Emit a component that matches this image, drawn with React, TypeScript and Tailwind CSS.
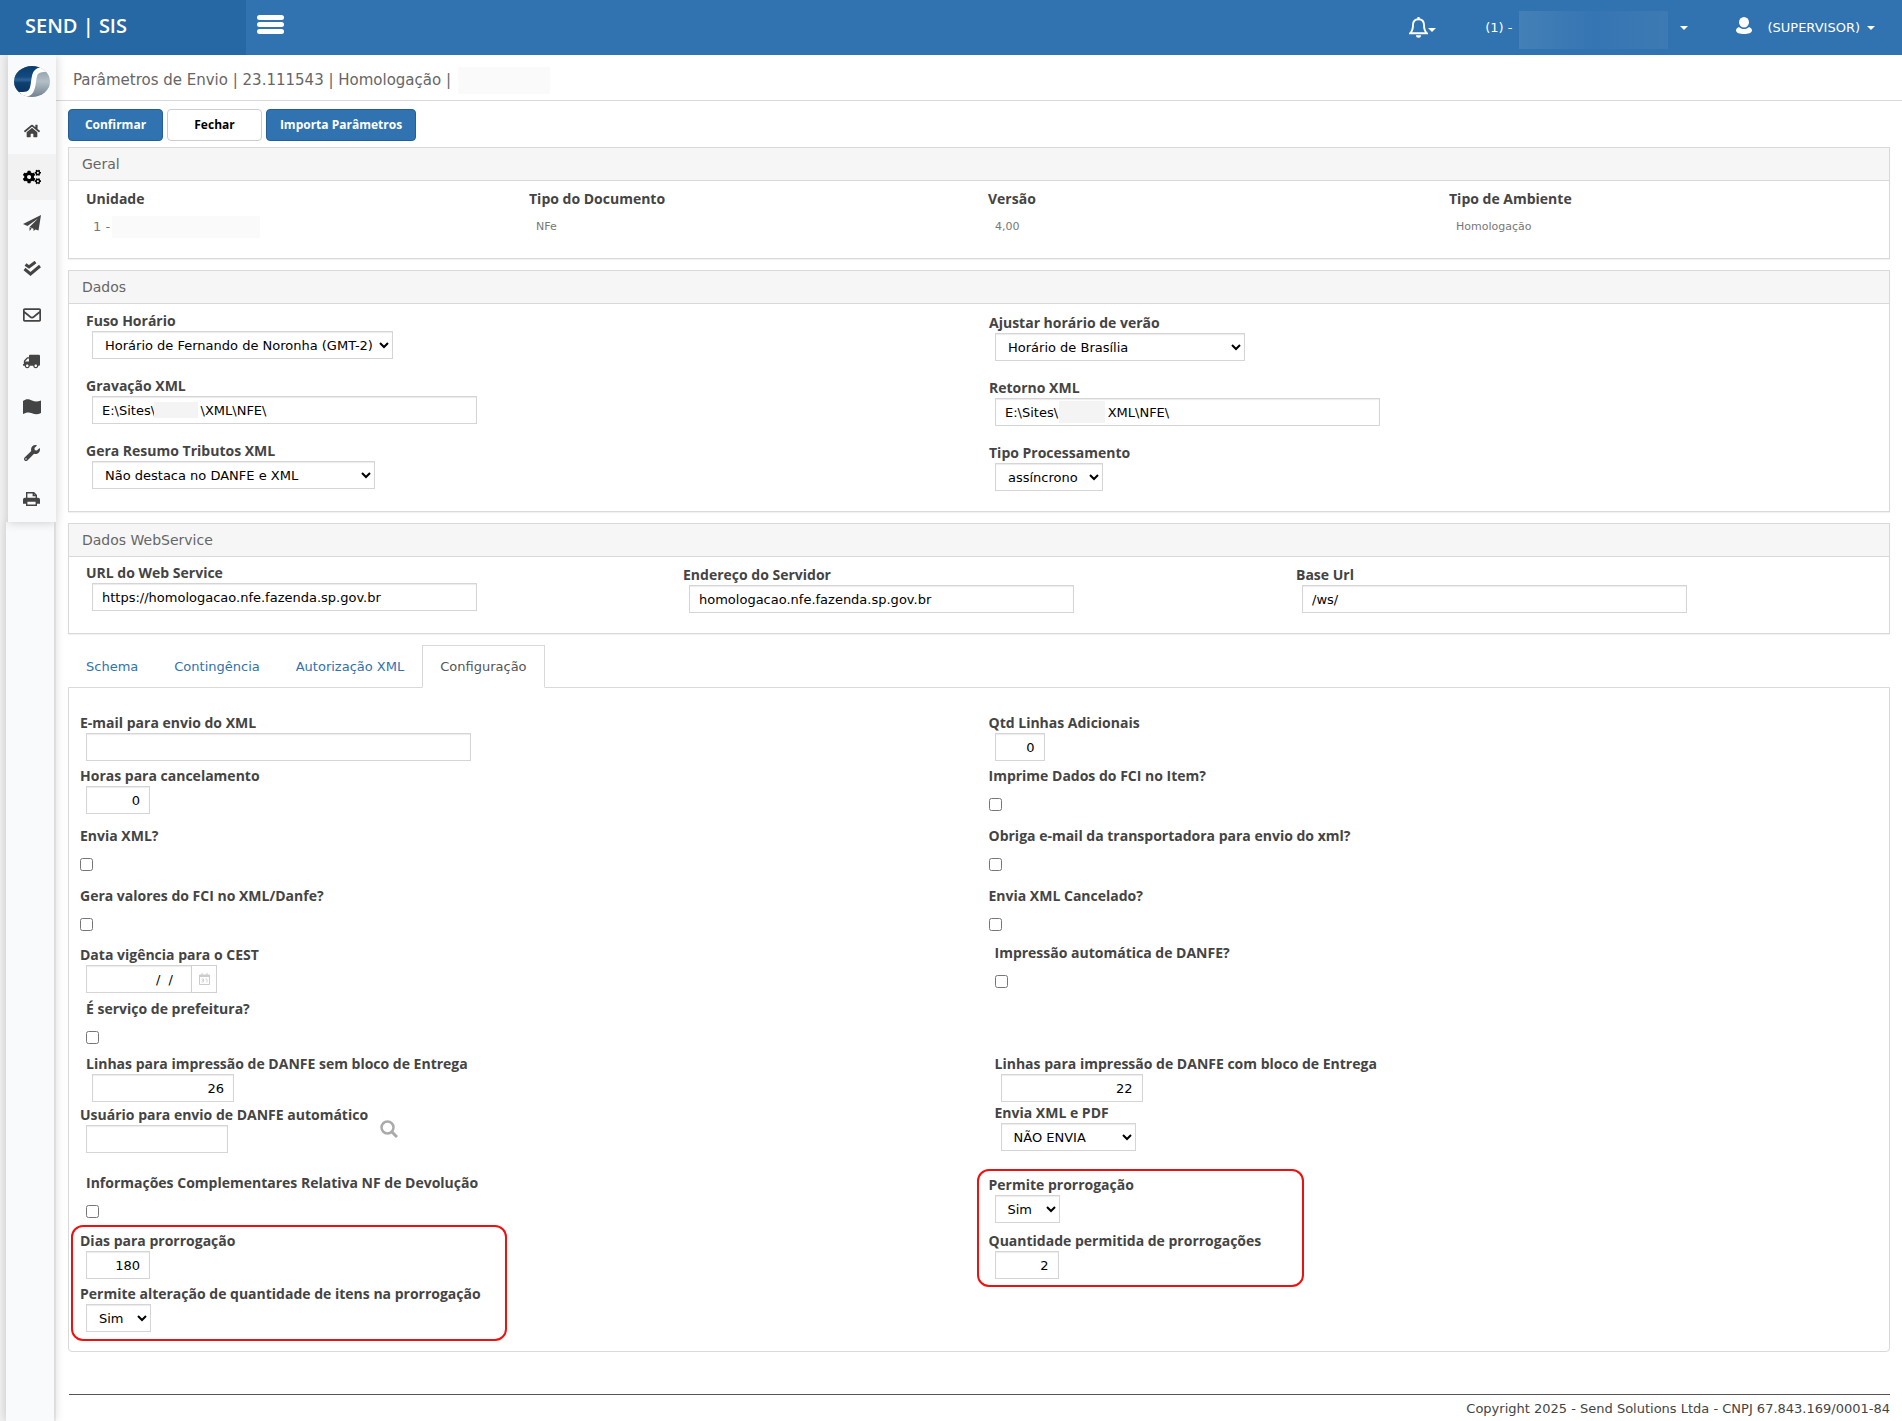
import React from 'react';
import { FaHome, FaCogs, FaRegEnvelope, FaTruck, FaWrench } from 'react-icons/fa';

const inputClass =
  'block h-7 rounded-none border border-[#d5d5d5] bg-white text-[13px] text-black shadow-[inset_0_1px_1px_rgba(0,0,0,0.08)]';

interface LabelProps {
  htmlFor: string;
  children: React.ReactNode;
}

function Label({ htmlFor, children }: LabelProps) {
  return (
    <label
      htmlFor={htmlFor}
      className="block h-5 whitespace-nowrap font-['Open_Sans',sans-serif] text-sm leading-5 font-bold text-[#444]"
    >
      {children}
    </label>
  );
}

interface FieldProps {
  id: string;
  label: string;
  className?: string;
  value?: string;
  width?: string;
  align?: string;
}

function TextField({ id, label, className = '', value = '', width = 'w-[385px]', align = '' }: FieldProps) {
  return (
    <div className={className}>
      <Label htmlFor={id}>{label}</Label>
      <input id={id} type="text" defaultValue={value} className={`${inputClass} ml-1.5 px-[9px] ${width} ${align}`} />
    </div>
  );
}

// Path fields have the customer folder hidden
function PathField({ id, label, className = '', value, mask }: FieldProps & { mask: string }) {
  return (
    <div className={className}>
      <Label htmlFor={id}>{label}</Label>
      <div className="relative ml-1.5 w-[385px]">
        <input id={id} type="text" defaultValue={value} className={`${inputClass} w-full px-[9px]`} />
        <span className={`absolute bg-[#f4f4f4] ${mask}`} />
      </div>
    </div>
  );
}

function SelectField({ id, label, className = '', value, width = '' }: FieldProps) {
  return (
    <div className={className}>
      <Label htmlFor={id}>{label}</Label>
      <select id={id} className={`${inputClass} ml-1.5 pl-2 ${width}`}>
        <option>{value}</option>
      </select>
    </div>
  );
}

function CheckField({ id, label, className = '' }: FieldProps) {
  return (
    <div className={className}>
      <Label htmlFor={id}>{label}</Label>
      <input id={id} type="checkbox" className="mt-3 block h-[13px] w-[13px]" />
    </div>
  );
}

function Panel({ title, children }: { title: string; children: React.ReactNode }) {
  return (
    <section className="mb-[11px] border border-[#d9d9d9] shadow-[0_1px_1px_rgba(0,0,0,0.05)]">
      <h2 className="h-[33px] border-b border-[#d9d9d9] bg-[#f6f6f6] px-[13px] text-sm leading-8 text-[#666]">
        {title}
      </h2>
      {children}
    </section>
  );
}

function Caret({ className = '' }: { className?: string }) {
  return (
    <span
      className={`inline-block h-0 w-0 border-x-4 border-t-4 border-x-transparent border-t-white ${className}`}
    />
  );
}

function Logo() {
  return (
    <svg width="36" height="31" viewBox="0 0 36 31">
      <defs>
        <linearGradient id="logoBlue" x1="0" y1="0" x2="0" y2="1">
          <stop offset="0" stopColor="#0b3c6b" />
          <stop offset="0.38" stopColor="#124a80" />
          <stop offset="0.5" stopColor="#2f6496" />
          <stop offset="0.6" stopColor="#0d3f70" />
          <stop offset="1" stopColor="#0b3560" />
        </linearGradient>
        <linearGradient id="logoGray" x1="0" y1="0" x2="0" y2="1">
          <stop offset="0" stopColor="#8797a3" />
          <stop offset="0.5" stopColor="#b3bfc7" />
          <stop offset="1" stopColor="#71828f" />
        </linearGradient>
        <clipPath id="logoShape">
          <ellipse cx="18" cy="15.500" rx="18" ry="15.500" />
        </clipPath>
      </defs>
      <g clipPath="url(#logoShape)">
        <path d="M0 0h36v31H0z" fill="url(#logoGray)" />
        <path d="M0 0H28C20 4 21 10 20 16c-1 8-3 12-11 12H0z" fill="url(#logoBlue)" />
        <path d="M38 3.500H29C20.500 4 20.500 9 19.500 16 18.500 24 17 28.500 9 28.500H-2" fill="none" stroke="#fff" strokeWidth="5" />
      </g>
    </svg>
  );
}

function PlaneIcon() {
  return (
    <svg width="18" height="16" viewBox="0 0 18 16" fill="currentColor">
      <path d="M18 0 0 9l4.500 2L15 3.500 6.500 12v0l4 1.800V16l2-1.600L15.500 15.500z" />
      <path d="M6.500 12.300V16l2.200-2.400z" />
    </svg>
  );
}

function ChecksIcon() {
  return (
    <svg width="18" height="16" viewBox="0 0 18 16" fill="none" stroke="currentColor" strokeWidth="3">
      <path d="M2.500 3.500 6 6 12.500 1" />
      <path d="M1.500 8 7.500 13 17 5" />
    </svg>
  );
}

function MapIcon() {
  return (
    <svg width="18" height="16" viewBox="0 0 18 16" fill="currentColor">
      <path d="M0 2C3 0 5-.3 9 1.500c3.500 1.600 6 .9 9 0V14c-3 1.500-5.500 1.800-9 .3C5.500 12.800 3 13.500 0 15z" />
    </svg>
  );
}

function PrintIcon() {
  return (
    <svg width="17" height="14" viewBox="0 0 17 14" fill="none" stroke="currentColor" strokeWidth="1.400">
      <path d="M3.700 6.500V.7h7.100l2.500 2.500v3.300M10.300.7v2.800h3" />
      <path d="M.7 11V7.700c0-.8.500-1.200 1.200-1.200h13.200c.7 0 1.200.4 1.200 1.200V11h-3V8.800H3.700V11z" fill="currentColor" />
      <path d="M3.700 9h9.600v4.300H3.700z" fill="#f9fafc" />
    </svg>
  );
}

function BellIcon() {
  return (
    <svg width="19" height="21" viewBox="0 0 19 21" fill="none" stroke="currentColor" strokeWidth="1.900">
      <path d="M9.500 2.200C5.500 2.200 4 5 4 8c0 4-1 6.500-2.800 8.200h16.600C16 14.500 15 12 15 8c0-3-1.500-5.800-5.500-5.800z" />
      <path d="M9.500 0v2.500" strokeWidth="2.200" />
      <path d="M7 18.200a2.500 2.500 0 0 0 5 0z" fill="currentColor" stroke="none" />
    </svg>
  );
}

function UserIcon() {
  return (
    <svg width="16" height="17" viewBox="0 0 16 17" fill="currentColor">
      <ellipse cx="8" cy="5.300" rx="5" ry="5.300" />
      <path d="M3 10c1.500 1.400 3 2 5 2s3.500-.6 5-2c2 .8 3 2 3 3.500C16 16 12 17 8 17s-8-1-8-3.500C0 12 1 10.800 3 10z" />
    </svg>
  );
}

const menu = [
  { name: 'Início', icon: <FaHome size={16} /> },
  { name: 'Configurações', icon: <FaCogs size={18} />, active: true },
  { name: 'Envio', icon: <PlaneIcon /> },
  { name: 'Validação', icon: <ChecksIcon /> },
  { name: 'E-mail', icon: <FaRegEnvelope size={18} /> },
  { name: 'Transporte', icon: <FaTruck size={17} className="-scale-x-100" /> },
  { name: 'Mapa', icon: <MapIcon /> },
  { name: 'Ferramentas', icon: <FaWrench size={16} /> },
  { name: 'Impressão', icon: <PrintIcon /> },
];

const tabs = ['Schema', 'Contingência', 'Autorização XML', 'Configuração'];

function Sidebar() {
  return (
    <aside className="flex w-14 shrink-0 flex-col bg-[#f2f2f2]">
      <nav className="relative z-10 ml-2 bg-[#f9fafc] shadow-[0_0_10px_rgba(0,0,0,0.2)]">
        <a href="#" aria-label="Send" className="flex h-[53px] items-center pl-[6px]">
          <Logo />
        </a>
        {menu.map((item) => (
          <a
            key={item.name}
            href="#"
            aria-label={item.name}
            className={`flex h-[46px] items-center justify-center pr-px ${
              item.active ? 'bg-[#f2f2f2] text-black' : 'text-[#444]'
            }`}
          >
            {item.icon}
          </a>
        ))}
      </nav>
      <div className="ml-1.5 w-12 flex-1 bg-[#f9fafc] shadow-[0_0_10px_rgba(0,0,0,0.2)]" />
    </aside>
  );
}

function Header() {
  return (
    <header className="relative z-20 flex h-[55px] bg-[#3073b0] text-[13px] text-white">
      <div className="w-[246px] bg-[#2668a4] pl-[25px] font-['Open_Sans',sans-serif] text-xl leading-[52px] font-semibold">
        SEND | SIS
      </div>
      <button type="button" aria-label="Menu" className="ml-[11px] flex h-12 w-[27px] flex-col justify-center gap-0.5">
        <span className="h-[5px] w-full rounded-sm bg-white" />
        <span className="h-[5px] w-full rounded-sm bg-white" />
        <span className="h-[5px] w-full rounded-sm bg-white" />
      </button>
      <div className="ml-auto flex h-[55px] items-center pr-[27px]">
        <button type="button" aria-label="Notificações" className="flex items-center">
          <BellIcon />
          <Caret className="mt-1" />
        </button>
        <button type="button" className="ml-[49px] flex items-center">
          (1) -
          <span className="mt-1 ml-[7px] h-[38px] w-[149px] bg-linear-to-r from-[#4480b7] via-[#3575b3] to-[#3d7ab3]" />
          <Caret className="ml-3" />
        </button>
        <button type="button" className="ml-12 flex items-center">
          <span className="mr-[15px] pb-1">
            <UserIcon />
          </span>
          (SUPERVISOR)
          <Caret className="ml-[7px]" />
        </button>
      </div>
    </header>
  );
}

interface InfoProps {
  term: string;
  children: React.ReactNode;
}

function Info({ term, children }: InfoProps) {
  return (
    <div>
      <dt className="font-['Open_Sans',sans-serif] text-sm leading-5 font-bold text-[#444]">{term}</dt>
      <dd className="mt-2 flex h-5 items-center pl-[7px]">{children}</dd>
    </div>
  );
}

function App() {
  return (
    <div className="flex min-h-screen flex-col bg-white font-['DejaVu_Sans',Verdana,sans-serif] text-[13px] text-[#444]">
      <Header />
      <div className="flex flex-1">
        <Sidebar />
        <div className="flex min-w-0 flex-1 flex-col">
          <h1 className="flex h-[46px] items-center border-b border-[#d9d9d9] pt-1.5 pl-[17px] text-[15px] text-[#666]">
            Parâmetros de Envio | 23.111543 | Homologação |
            <span className="ml-[7px] h-[27px] w-[92px] bg-[#fafafa]" />
          </h1>

          <main className="px-3 pt-2">
            <div className="mb-1.5 flex gap-1 font-['Open_Sans',sans-serif] text-xs font-bold">
              <button type="button" className="h-8 w-[95px] rounded border border-[#225f99] bg-[#3073b0] text-white">
                Confirmar
              </button>
              <button type="button" className="h-8 w-[95px] rounded border border-[#ccc] bg-white text-black">
                Fechar
              </button>
              <button type="button" className="h-8 w-[150px] rounded border border-[#225f99] bg-[#3073b0] text-white">
                Importa Parâmetros
              </button>
            </div>

            <Panel title="Geral">
              <dl className="grid h-[77px] grid-cols-[443fr_459fr_461fr_440fr] pt-2 pl-[17px] text-[11px] text-[#777]">
                <Info term="Unidade">
                  <span className="text-[13px]">1 -</span>
                  <span className="ml-0.5 h-[22px] w-[148px] bg-[#fafafa]" />
                </Info>
                <Info term="Tipo do Documento">NFe</Info>
                <Info term="Versão">4,00</Info>
                <Info term="Tipo de Ambiente">Homologação</Info>
              </dl>
            </Panel>

            <Panel title="Dados">
              <div className="grid grid-cols-[903fr_900fr] pl-[17px]">
                <div className="flex h-[207px] flex-col gap-[17px] pt-[7px]">
                  <SelectField id="fuso" label="Fuso Horário" value="Horário de Fernando de Noronha (GMT-2)" width="w-[301px]" />
                  <PathField
                    id="gravacao"
                    label="Gravação XML"
                    value={'E:\\Sites\\\u00a0\u00a0\u00a0\u00a0\u00a0\u00a0\u00a0\u00a0\u00a0\u00a0\u00a0\\XML\\NFE\\'}
                    mask="top-1.5 left-[62px] h-4 w-[44px]"
                  />
                  <SelectField id="resumo" label="Gera Resumo Tributos XML" value="Não destaca no DANFE e XML" width="w-[283px]" />
                </div>
                <div className="flex h-[207px] flex-col gap-[17px] pt-[9px]">
                  <SelectField id="verao" label="Ajustar horário de verão" value="Horário de Brasília" width="w-[250px]" />
                  <PathField
                    id="retorno"
                    label="Retorno XML"
                    value={'E:\\Sites\\\u00a0\u00a0\u00a0\u00a0\u00a0\u00a0\u00a0\u00a0\u00a0\u00a0\u00a0\u00a0XML\\NFE\\'}
                    mask="top-[3px] left-16 h-[22px] w-[46px]"
                  />
                  <SelectField id="processamento" label="Tipo Processamento" value="assíncrono" width="w-[108px]" />
                </div>
              </div>
            </Panel>

            <Panel title="Dados WebService">
              <div className="grid h-[76px] grid-cols-[597fr_613fr_593fr] pl-[17px]">
                <TextField id="url" label="URL do Web Service" className="pt-1.5" value="https://homologacao.nfe.fazenda.sp.gov.br" />
                <TextField id="servidor" label="Endereço do Servidor" className="pt-2" value="homologacao.nfe.fazenda.sp.gov.br" />
                <TextField id="base" label="Base Url" className="pt-2" value="/ws/" />
              </div>
            </Panel>

            <ul className="flex">
              {tabs.map((tab) => (
                <li key={tab} className="-mb-px">
                  <a
                    href="#"
                    className={`relative block h-[43px] border px-[17px] leading-[42px] ${
                      tab === 'Configuração'
                        ? 'border-[#d9d9d9] border-b-white bg-white text-[#555]'
                        : 'border-transparent text-[#2f72ae]'
                    }`}
                  >
                    {tab}
                  </a>
                </li>
              ))}
            </ul>

            <div className="grid grid-cols-[909fr_912fr] rounded-b border border-[#d9d9d9] pt-[25px] pb-[14px]">
              <div className="pl-[11px]">
                <TextField id="email" label="E-mail para envio do XML" className="h-[53px]" />
                <TextField id="horas" label="Horas para cancelamento" className="h-[60px]" value="0" width="w-16" align="text-right" />
                <CheckField id="enviaXml" label="Envia XML?" className="h-[60px]" />
                <CheckField id="fciDanfe" label="Gera valores do FCI no XML/Danfe?" className="h-[59px]" />
                <div className="h-[54px]">
                  <Label htmlFor="cest">Data vigência para o CEST</Label>
                  <div className="ml-1.5 flex">
                    <input
                      id="cest"
                      type="text"
                      defaultValue={'/\u00a0\u00a0/'}
                      className={`${inputClass} w-[106px] pr-[18px] text-right`}
                    />
                    <button
                      type="button"
                      aria-label="Calendário"
                      className="-ml-px flex h-7 w-[26px] items-center justify-center border border-[#d0d0d0] text-[#ccc]"
                    >
                      <svg width="11" height="12" viewBox="0 0 11 12" fill="none" stroke="currentColor">
                        <path d="M.5 2h10v9.500H.5z" />
                        <path d="M0 3h11" strokeWidth="2" />
                        <path d="M3 0v2.500M8 0v2.500" />
                        <path d="M2.500 6h2v3h-2M3 7.500h1.500M6.500 6H8v3.500" strokeWidth="0.800" />
                      </svg>
                    </button>
                  </div>
                </div>
                <CheckField id="prefeitura" label="É serviço de prefeitura?" className="h-[55px] pl-1.5" />
                <TextField
                  id="semBloco"
                  label="Linhas para impressão de DANFE sem bloco de Entrega"
                  className="h-[51px] pl-1.5"
                  value="26"
                  width="w-[142px]"
                  align="text-right"
                />
                <div className="flex h-[68px]">
                  <TextField id="usuario" label="Usuário para envio de DANFE automático" width="w-[142px]" />
                  <button type="button" aria-label="Pesquisar" className="mt-[15px] ml-3 h-[18px] w-[18px] text-[#aaa]">
                    <svg width="18" height="18" viewBox="0 0 18 18" fill="none" stroke="currentColor" strokeWidth="2.500">
                      <circle cx="7.500" cy="7.500" r="6" />
                      <path d="m12 12 5 5" strokeWidth="3" />
                    </svg>
                  </button>
                </div>
                <CheckField
                  id="devolucao"
                  label="Informações Complementares Relativa NF de Devolução"
                  className="h-[58px] pl-1.5"
                />
                <div className="relative">
                  <TextField id="dias" label="Dias para prorrogação" className="h-[53px]" value="180" width="w-16" align="text-right" />
                  <SelectField id="alteracao" label="Permite alteração de quantidade de itens na prorrogação" className="h-[53px]" value="Sim" width="w-[65px]" />
                  <span className="pointer-events-none absolute -top-1.5 -left-[9px] h-[116px] w-[436px] rounded-xl border-2 border-[#f01010]" />
                </div>
              </div>

              <div className="pl-[11px]">
                <TextField id="linhas" label="Qtd Linhas Adicionais" className="h-[53px]" value="0" width="w-[50px]" align="text-right" />
                <CheckField id="fciItem" label="Imprime Dados do FCI no Item?" className="h-[60px]" />
                <CheckField id="obriga" label="Obriga e-mail da transportadora para envio do xml?" className="h-[60px]" />
                <CheckField id="cancelado" label="Envia XML Cancelado?" className="h-[57px]" />
                <CheckField id="automatica" label="Impressão automática de DANFE?" className="h-[111px] pl-1.5" />
                <TextField
                  id="comBloco"
                  label="Linhas para impressão de DANFE com bloco de Entrega"
                  className="h-[49px] pl-1.5"
                  value="22"
                  width="w-[142px]"
                  align="text-right"
                />
                <SelectField id="pdf" label="Envia XML e PDF" className="h-[72px] pl-1.5" value="NÃO ENVIA" width="w-[135px]" />
                <div className="relative">
                  <SelectField id="permite" label="Permite prorrogação" className="h-[56px]" value="Sim" width="w-[65px]" />
                  <TextField id="quantidade" label="Quantidade permitida de prorrogações" className="h-[53px]" value="2" width="w-16" align="text-right" />
                  <span className="pointer-events-none absolute -top-1.5 -left-3 h-[118px] w-[327px] rounded-xl border-2 border-[#f01010]" />
                </div>
              </div>
            </div>
          </main>

          <footer className="mt-[42px] mr-3 ml-[13px] border-t border-[#555] pt-1.5 text-right leading-4">
            Copyright 2025 - Send Solutions Ltda - CNPJ 67.843.169/0001-84
          </footer>
        </div>
      </div>
    </div>
  );
}

export default App;
